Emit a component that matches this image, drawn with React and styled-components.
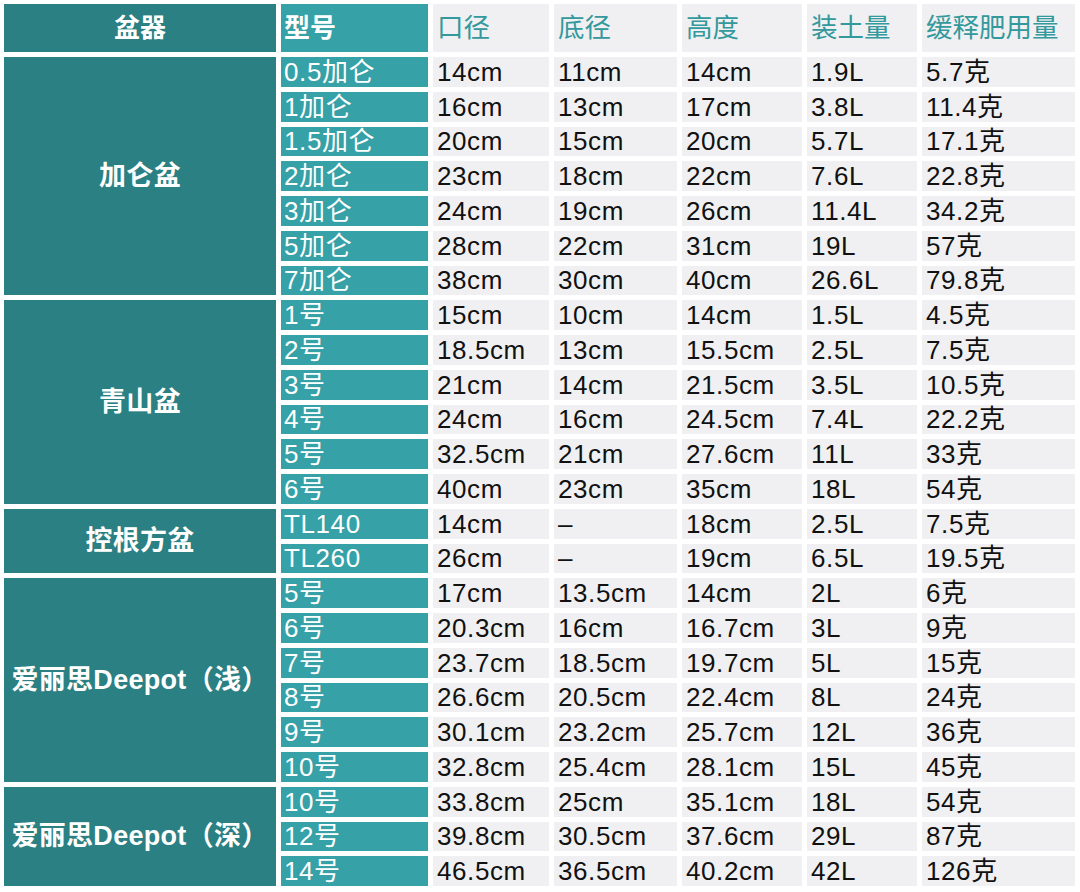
import React from "react";
import styled, { createGlobalStyle } from "styled-components";

const GlobalStyle = createGlobalStyle`
  html, body {
    margin: 0;
    padding: 0;
    background: #fff;
  }
  body {
    font-family: "Liberation Sans", "Noto Sans CJK SC", sans-serif;
  }
`;

const Sheet = styled.div`
  width: 1080px;
  height: 892px;
  box-sizing: border-box;
  padding: 4px 0 0 4px;
  background: #fff;
`;

const Grid = styled.div`
  display: grid;
  grid-template-columns: 272px 147px 116px 123px 120px 110px 153px;
  grid-template-rows: 48px repeat(24, 29.75px);
  column-gap: 5px;
  row-gap: 5px;
`;

const Cell = styled.div`
  display: flex;
  align-items: center;
  overflow: hidden;
  white-space: nowrap;
  font-size: 26px;
  letter-spacing: 0.6px;
  line-height: 1;
`;

const PotHead = styled(Cell)`
  justify-content: center;
  background: #2b8083;
  color: #fff;
  font-weight: 700;
  font-size: 26px;
  letter-spacing: 0;
`;

const ModelHead = styled(Cell)`
  padding-left: 3px;
  background: #36a1a7;
  color: #fff;
  font-weight: 700;
  font-size: 26px;
  letter-spacing: 0;
`;

const ColHead = styled(Cell)`
  padding-left: 4px;
  background: #f0f0f2;
  color: #33999c;
  font-size: 26.5px;
  letter-spacing: 0;
`;

const Group = styled(Cell)`
  grid-row: span ${({ $rows }) => $rows};
  justify-content: center;
  background: #2b8083;
  color: #fff;
  font-weight: 700;
  font-size: 27px;
  letter-spacing: 0.3px;
`;

const Model = styled(Cell)`
  padding-left: 3px;
  background: #36a1a7;
  color: #fff;
`;

const Value = styled(Cell)`
  padding-left: 4px;
  background: #f0f0f2;
  color: #111;
`;

const columns = ["口径", "底径", "高度", "装土量", "缓释肥用量"];

const groups = [
  {
    name: "加仑盆",
    rows: [
      ["0.5加仑", "14cm", "11cm", "14cm", "1.9L", "5.7克"],
      ["1加仑", "16cm", "13cm", "17cm", "3.8L", "11.4克"],
      ["1.5加仑", "20cm", "15cm", "20cm", "5.7L", "17.1克"],
      ["2加仑", "23cm", "18cm", "22cm", "7.6L", "22.8克"],
      ["3加仑", "24cm", "19cm", "26cm", "11.4L", "34.2克"],
      ["5加仑", "28cm", "22cm", "31cm", "19L", "57克"],
      ["7加仑", "38cm", "30cm", "40cm", "26.6L", "79.8克"],
    ],
  },
  {
    name: "青山盆",
    rows: [
      ["1号", "15cm", "10cm", "14cm", "1.5L", "4.5克"],
      ["2号", "18.5cm", "13cm", "15.5cm", "2.5L", "7.5克"],
      ["3号", "21cm", "14cm", "21.5cm", "3.5L", "10.5克"],
      ["4号", "24cm", "16cm", "24.5cm", "7.4L", "22.2克"],
      ["5号", "32.5cm", "21cm", "27.6cm", "11L", "33克"],
      ["6号", "40cm", "23cm", "35cm", "18L", "54克"],
    ],
  },
  {
    name: "控根方盆",
    rows: [
      ["TL140", "14cm", "–", "18cm", "2.5L", "7.5克"],
      ["TL260", "26cm", "–", "19cm", "6.5L", "19.5克"],
    ],
  },
  {
    name: "爱丽思Deepot（浅）",
    rows: [
      ["5号", "17cm", "13.5cm", "14cm", "2L", "6克"],
      ["6号", "20.3cm", "16cm", "16.7cm", "3L", "9克"],
      ["7号", "23.7cm", "18.5cm", "19.7cm", "5L", "15克"],
      ["8号", "26.6cm", "20.5cm", "22.4cm", "8L", "24克"],
      ["9号", "30.1cm", "23.2cm", "25.7cm", "12L", "36克"],
      ["10号", "32.8cm", "25.4cm", "28.1cm", "15L", "45克"],
    ],
  },
  {
    name: "爱丽思Deepot（深）",
    rows: [
      ["10号", "33.8cm", "25cm", "35.1cm", "18L", "54克"],
      ["12号", "39.8cm", "30.5cm", "37.6cm", "29L", "87克"],
      ["14号", "46.5cm", "36.5cm", "40.2cm", "42L", "126克"],
    ],
  },
];

export default function App() {
  return (
    <Sheet>
      <GlobalStyle />
      <Grid>
        <PotHead>盆器</PotHead>
        <ModelHead>型号</ModelHead>
        {columns.map((c) => (
          <ColHead key={c}>{c}</ColHead>
        ))}
        {groups.map((g) => (
          <React.Fragment key={g.name}>
            <Group $rows={g.rows.length}>{g.name}</Group>
            {g.rows.map((r, i) => (
              <React.Fragment key={i}>
                <Model>{r[0]}</Model>
                {r.slice(1).map((v, j) => (
                  <Value key={j}>{v}</Value>
                ))}
              </React.Fragment>
            ))}
          </React.Fragment>
        ))}
      </Grid>
    </Sheet>
  );
}
